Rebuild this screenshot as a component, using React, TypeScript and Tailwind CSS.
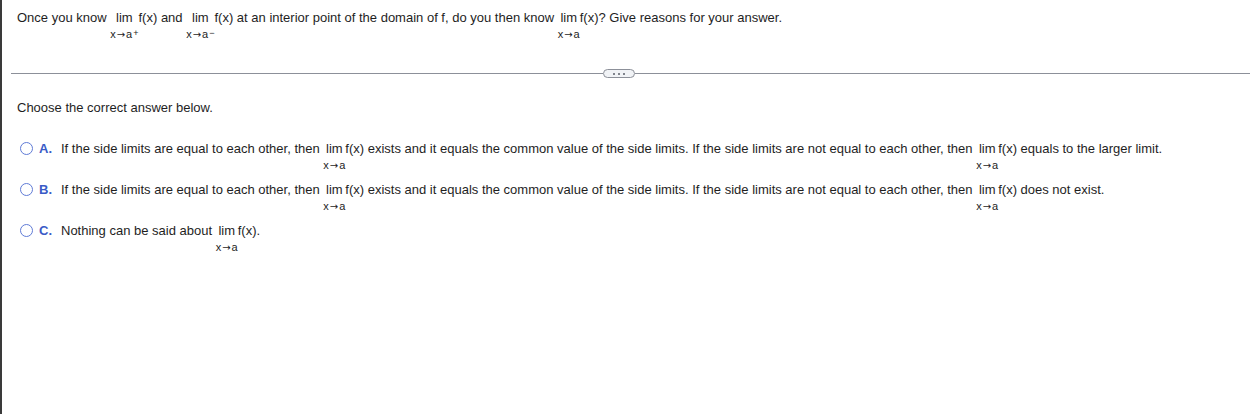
import React from 'react';

type LimProps = { sup?: string };

// "lim" with its x→a subscript stacked underneath
function Lim({ sup }: LimProps) {
  return (
    <span className="inline-flex flex-col items-center align-top">
      <span>lim</span>
      <span className="text-[11px] leading-[15px] pt-px whitespace-nowrap">
        x<span className="text-[10px] mx-px" style={{ fontFamily: '"DejaVu Sans", sans-serif' }}>→</span>a
        {sup && <sup className="text-[9px] relative -top-[2px] ml-px">{sup}</sup>}
      </span>
    </span>
  );
}

type OptionProps = { letter: string; children: React.ReactNode };

function Option({ letter, children }: OptionProps) {
  return (
    <div className="flex items-start">
      <span className="mt-[2px] ml-[3px] w-[13px] h-[13px] rounded-full border-[1.5px] border-[#5f7bd6] bg-white shrink-0" />
      <span className="ml-[6px] w-[22px] font-bold text-[#3a5bc7] shrink-0">{letter}.</span>
      <p>{children}</p>
    </div>
  );
}

export default function App() {
  return (
    <div
      className="min-h-screen bg-white border-l-2 border-[#3a3a3a] text-[13px] leading-[17px] text-[#1e1e1e]"
      style={{ fontFamily: '"Liberation Sans", Arial, sans-serif' }}
    >
      <div className="pt-[9px] pl-[15px]">
        <p>
          Once you know <Lim sup="+" />f(x) and <Lim sup="−" />f(x) at an interior point of the domain of f, do you
          then know <Lim />f(x)? Give reasons for your answer.
        </p>
      </div>

      <div className="mt-[27px] ml-[9px] flex items-center">
        <div className="w-[592px] h-px bg-[#8c9099]" />
        <button className="w-[32px] h-[9px] rounded-full border border-[#8c9099] bg-[#f1f3f6] flex items-center justify-center gap-[3px]">
          <span className="w-[2px] h-[2px] rounded-full bg-[#5a5f68]" />
          <span className="w-[2px] h-[2px] rounded-full bg-[#5a5f68]" />
          <span className="w-[2px] h-[2px] rounded-full bg-[#5a5f68]" />
        </button>
        <div className="flex-1 h-px bg-[#8c9099]" />
      </div>

      <div className="pl-[15px] pt-[21px]">
        <p>Choose the correct answer below.</p>

        <div className="mt-[24px] flex flex-col gap-[8px]">
          <Option letter="A">
            If the side limits are equal to each other, then <Lim />f(x) exists and it equals the common value of the side
            limits. If the side limits are not equal to each other, then <Lim />f(x) equals to the larger limit.
          </Option>
          <Option letter="B">
            If the side limits are equal to each other, then <Lim />f(x) exists and it equals the common value of the side
            limits. If the side limits are not equal to each other, then <Lim />f(x) does not exist.
          </Option>
          <Option letter="C">
            Nothing can be said about <Lim />f(x).
          </Option>
        </div>
      </div>
    </div>
  );
}
